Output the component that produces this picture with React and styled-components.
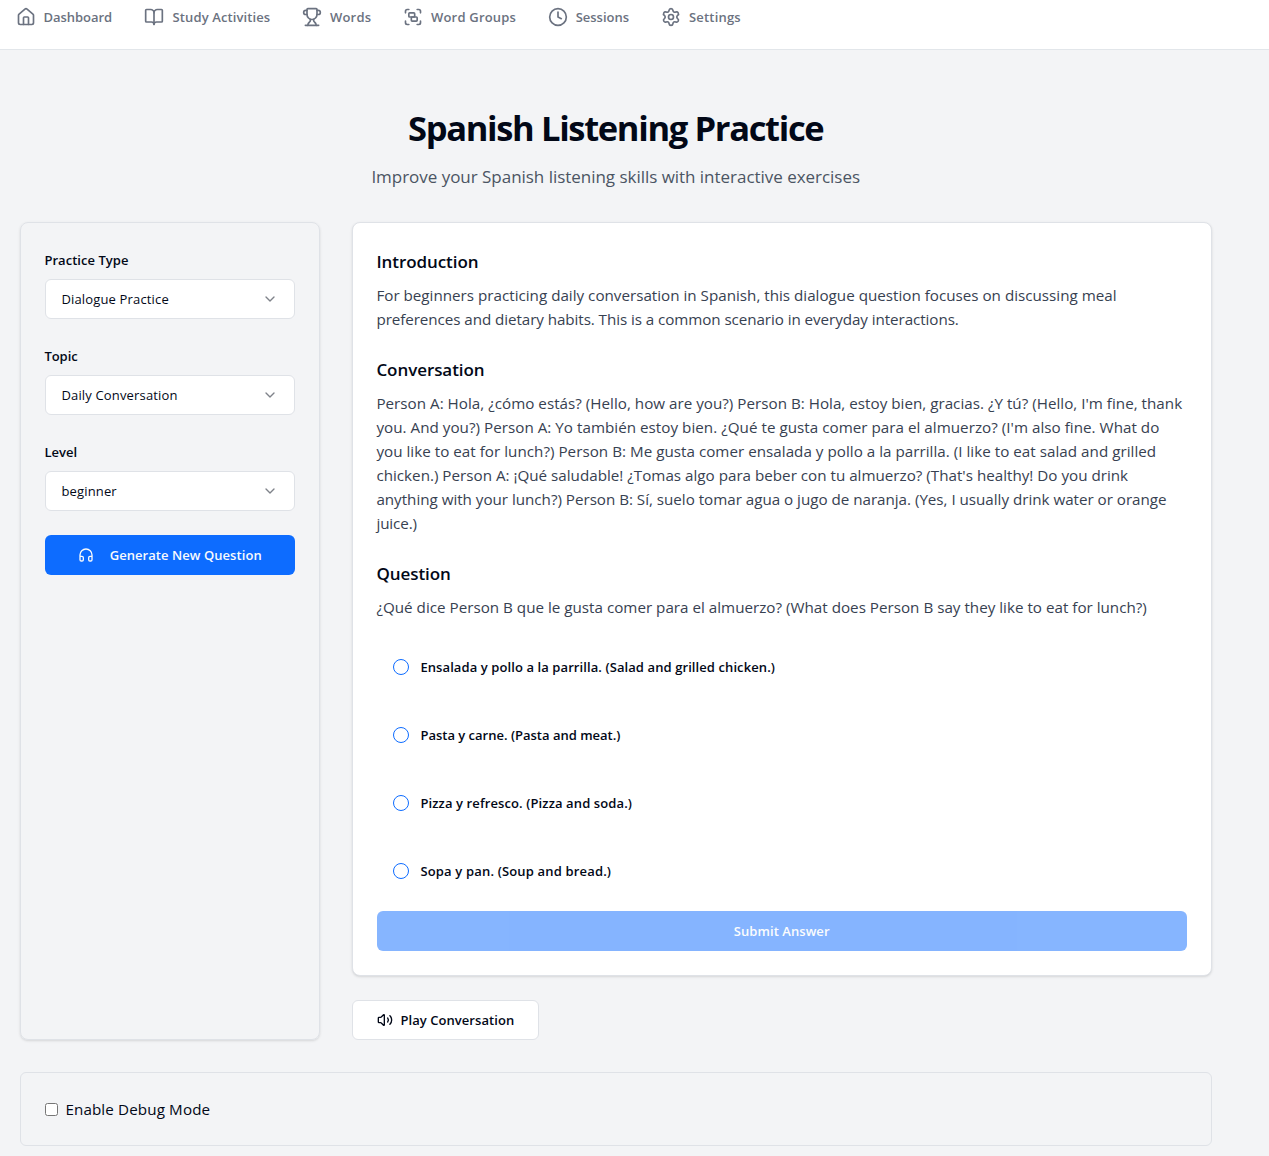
import React from 'react';
import styled, { createGlobalStyle } from 'styled-components';
import {
  House,
  BookOpen,
  Trophy,
  Group,
  Clock,
  Settings,
  ChevronDown,
  Headphones,
  Volume2,
} from 'lucide-react';

const GlobalStyle = createGlobalStyle`
  *, *::before, *::after { box-sizing: border-box; }
  body {
    margin: 0;
    background: #f3f4f6;
    color: #020817;
    font-family: "Open Sans", "Noto Sans", sans-serif;
    font-size: 15.2px;
    line-height: 24px;
    text-indent: -0.6px;
  }
  h1, h2, p { margin: 0; }
  button { font-family: inherit; text-indent: inherit; }
  svg { flex-shrink: 0; display: block; }
`;

const Header = styled.header`
  height: 50px;
  padding: 5px 16px 0;
  background: #fff;
  border-bottom: 1px solid #e2e6ea;
`;

const Nav = styled.nav`
  display: flex;
  align-items: center;
  gap: 32px;
  height: 24px;
`;

const NavLink = styled.a`
  display: flex;
  align-items: center;
  gap: 8px;
  color: #6b7280;
  font-size: 13px;
  font-weight: 600;
  white-space: nowrap;
`;

const NavLabel = styled.span`
  width: ${(p) => p.$width}px;
  letter-spacing: ${(p) => p.$tracking}px;
  text-indent: ${(p) => p.$indent}px;
`;

const Main = styled.main`
  width: 1192px;
  margin-left: 20px;
  padding: 58px 0 10px;
`;

const Intro = styled.div`
  display: flex;
  flex-direction: column;
  align-items: center;
  gap: 15px;
  margin-bottom: 31px;
`;

const Title = styled.h1`
  font-size: 34.5px;
  line-height: 40px;
  font-weight: 700;
  letter-spacing: -1.33px;
`;

const Subtitle = styled.p`
  font-size: 17px;
  line-height: 28px;
  letter-spacing: -0.03px;
  color: #4b5563;
`;

const Columns = styled.div`
  display: grid;
  grid-template-columns: 300px 1fr;
  gap: 32px;
`;

const Panel = styled.section`
  padding: 24px;
  border: 1px solid #dfe2e7;
  border-radius: 8px;
  box-shadow: 0 1px 3px rgba(0, 0, 0, 0.1), 0 1px 2px -1px rgba(0, 0, 0, 0.1);
`;

const Sidebar = styled(Panel)`
  display: flex;
  flex-direction: column;
  gap: 24px;
`;

const Field = styled.div`
  display: flex;
  flex-direction: column;
  gap: 6px;
`;

const FieldLabel = styled.label`
  font-size: 13px;
  line-height: 26px;
  font-weight: 600;
  letter-spacing: ${(p) => p.$tracking}px;
`;

const Select = styled.button`
  display: flex;
  align-items: center;
  justify-content: space-between;
  height: 40px;
  padding: 0 16px;
  background: #fff;
  border: 1px solid #dfe2e7;
  border-radius: 6px;
  color: #020817;
  font-size: 13px;
  letter-spacing: 0.16px;

  svg { opacity: 0.5; }
`;

const PrimaryButton = styled.button`
  display: flex;
  align-items: center;
  justify-content: center;
  gap: 16px;
  width: 100%;
  height: 40px;
  padding: 0;
  border: 0;
  border-radius: 6px;
  background: #0d6cff;
  color: #f8fafc;
  font-size: 13px;
  font-weight: 600;
  letter-spacing: 0.06px;

  &:disabled { opacity: 0.5; }
`;

const Content = styled.div`
  display: flex;
  flex-direction: column;
  align-items: flex-start;
  gap: 24px;
`;

const Card = styled(Panel)`
  width: 100%;
  background: #fff;
`;

const Block = styled.div`
  display: flex;
  flex-direction: column;
  gap: 6px;
  margin-bottom: 24px;
`;

const Heading = styled.h2`
  font-size: 17px;
  line-height: 30px;
  font-weight: 600;
  letter-spacing: -0.07px;
`;

const Paragraph = styled.p`
  color: #374151;
`;

const Line = styled.span`
  display: block;
  white-space: nowrap;
  letter-spacing: ${(p) => p.$tracking}px;
`;

const Options = styled.div`
  display: flex;
  flex-direction: column;
  gap: 20px;
  margin-bottom: 16px;
`;

const Option = styled.label`
  display: flex;
  align-items: center;
  gap: 12px;
  height: 48px;
  padding: 0 16px;
  font-size: 13px;
  font-weight: 600;
  letter-spacing: ${(p) => p.$tracking}px;
`;

const Radio = styled.span`
  width: 16px;
  height: 16px;
  border: 1px solid #0d6cff;
  border-radius: 50%;
`;

const OutlineButton = styled.button`
  display: flex;
  align-items: center;
  gap: 8px;
  width: 187px;
  height: 40px;
  padding: 0 0 0 24px;
  background: #fff;
  border: 1px solid #dfe2e7;
  border-radius: 6px;
  color: #020817;
  font-size: 13px;
  font-weight: 600;
  letter-spacing: 0.06px;
  white-space: nowrap;
`;

const DebugPanel = styled.label`
  display: flex;
  align-items: center;
  gap: 8px;
  margin-top: 32px;
  height: 74px;
  padding: 0 24px;
  border: 1px solid #dfe2e7;
  border-radius: 6px;
  letter-spacing: 0.12px;

  input { width: 13px; height: 13px; margin: 0; }
`;

const NAV = [
  [House, 'Dashboard', 68, -0.02, -0.6],
  [BookOpen, 'Study Activities', 98, 0.11, 0.6],
  [Trophy, 'Words', 41, 0.19, 0],
  [Group, 'Word Groups', 85, 0.19, 0],
  [Clock, 'Sessions', 53, -0.02, -0.3],
  [Settings, 'Settings', 53, 0.18, 0],
];

const FIELDS = [
  ['Practice Type', 'Dialogue Practice', 0.04],
  ['Topic', 'Daily Conversation', -0.05],
  ['Level', 'beginner', 0.05],
];

const SECTIONS = [
  ['Introduction', [
    ['For beginners practicing daily conversation in Spanish, this dialogue question focuses on discussing meal', 0.003],
    ['preferences and dietary habits. This is a common scenario in everyday interactions.', -0.07],
  ]],
  ['Conversation', [
    ["Person A: Hola, ¿cómo estás? (Hello, how are you?) Person B: Hola, estoy bien, gracias. ¿Y tú? (Hello, I'm fine, thank", 0.014],
    ["you. And you?) Person A: Yo también estoy bien. ¿Qué te gusta comer para el almuerzo? (I'm also fine. What do", 0.028],
    ['you like to eat for lunch?) Person B: Me gusta comer ensalada y pollo a la parrilla. (I like to eat salad and grilled', 0.024],
    ["chicken.) Person A: ¡Qué saludable! ¿Tomas algo para beber con tu almuerzo? (That's healthy! Do you drink", 0.003],
    ['anything with your lunch?) Person B: Sí, suelo tomar agua o jugo de naranja. (Yes, I usually drink water or orange', -0.02],
    ['juice.)', -0.1],
  ]],
  ['Question', [
    ['¿Qué dice Person B que le gusta comer para el almuerzo? (What does Person B say they like to eat for lunch?)', 0.007],
  ]],
];

const OPTIONS = [
  ['Ensalada y pollo a la parrilla. (Salad and grilled chicken.)', 0.09],
  ['Pasta y carne. (Pasta and meat.)', -0.005],
  ['Pizza y refresco. (Pizza and soda.)', 0.11],
  ['Sopa y pan. (Soup and bread.)', 0.165],
];

export default function App() {
  return (
    <>
      <GlobalStyle />
      <Header>
        <Nav>
          {NAV.map(([Icon, label, width, tracking, indent]) => (
            <NavLink key={label}>
              <Icon size={20} />
              <NavLabel $width={width} $tracking={tracking} $indent={indent}>{label}</NavLabel>
            </NavLink>
          ))}
        </Nav>
      </Header>
      <Main>
        <Intro>
          <Title>Spanish Listening Practice</Title>
          <Subtitle>Improve your Spanish listening skills with interactive exercises</Subtitle>
        </Intro>
        <Columns>
          <Sidebar>
            {FIELDS.map(([label, value, tracking]) => (
              <Field key={label}>
                <FieldLabel $tracking={tracking}>{label}</FieldLabel>
                <Select type="button">
                  {value}
                  <ChevronDown size={16} />
                </Select>
              </Field>
            ))}
            <PrimaryButton type="button">
              <Headphones size={16} />
              Generate New Question
            </PrimaryButton>
          </Sidebar>
          <Content>
            <Card>
              {SECTIONS.map(([title, lines]) => (
                <Block key={title}>
                  <Heading>{title}</Heading>
                  <Paragraph>
                    {lines.map(([text, tracking]) => (
                      <Line key={text} $tracking={tracking}>{text}</Line>
                    ))}
                  </Paragraph>
                </Block>
              ))}
              <Options>
                {OPTIONS.map(([text, tracking]) => (
                  <Option key={text} $tracking={tracking}>
                    <Radio />
                    {text}
                  </Option>
                ))}
              </Options>
              <PrimaryButton type="button" disabled>Submit Answer</PrimaryButton>
            </Card>
            <OutlineButton type="button">
              <Volume2 size={16} />
              Play Conversation
            </OutlineButton>
          </Content>
        </Columns>
        <DebugPanel>
          <input type="checkbox" />
          Enable Debug Mode
        </DebugPanel>
      </Main>
    </>
  );
}
